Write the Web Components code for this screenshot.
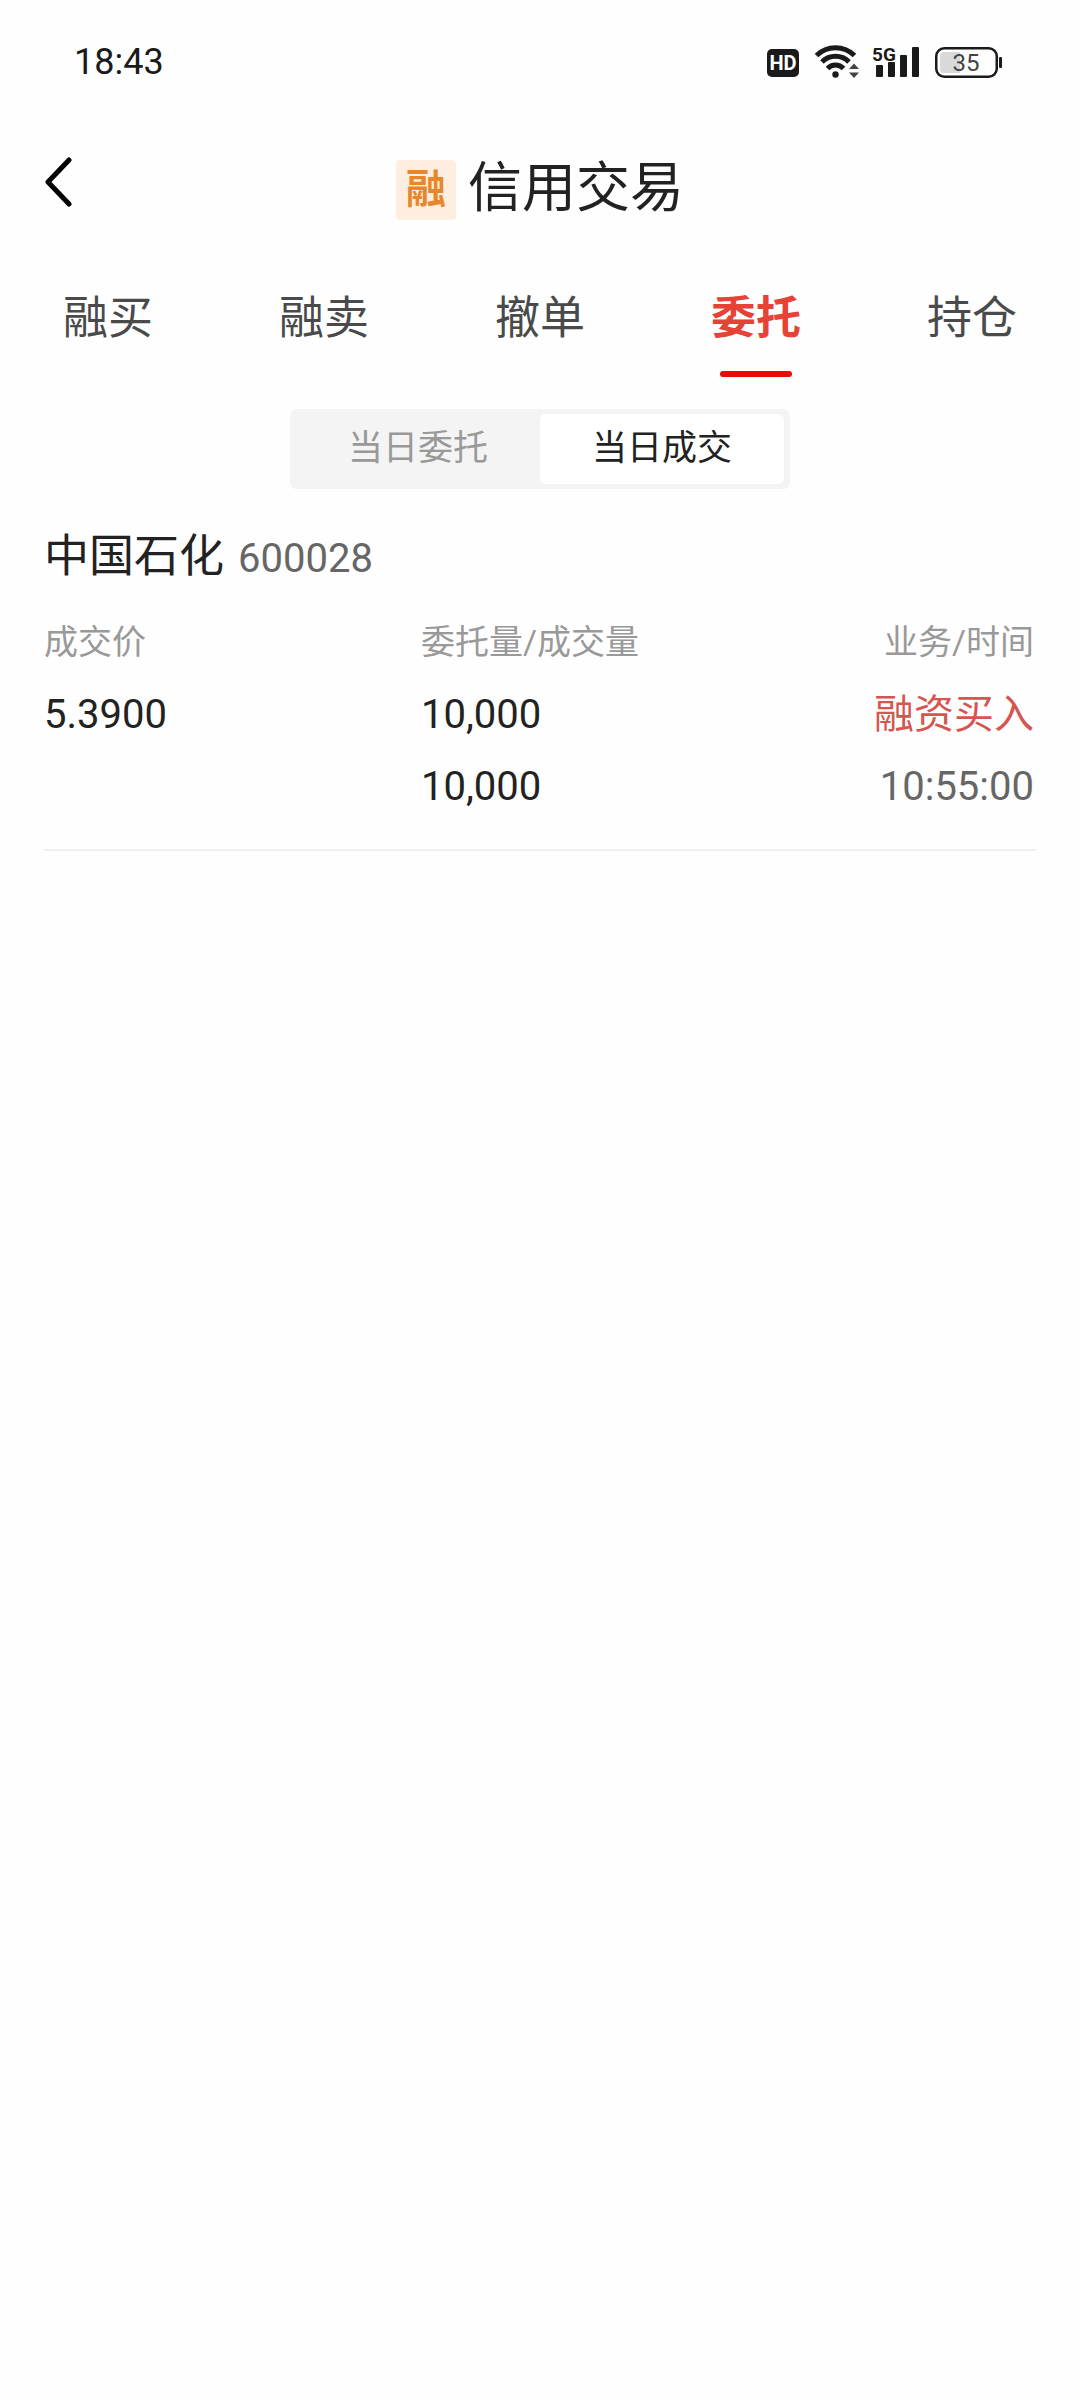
<!DOCTYPE html>
<html lang="zh-CN">
<head>
<meta charset="utf-8">
<meta name="viewport" content="width=device-width, initial-scale=1">
<title>信用交易</title>
<style>
body {
    margin: 0;
    min-height: 100vh;
    background-color: #fefefe;
    color: #222;
    font-family: Roboto, "Noto Sans CJK SC", sans-serif;
}
</style>
</head>
<body>
<status-bar time="18:43" battery="35"></status-bar>
<page-header badge="融">信用交易</page-header>
<tab-strip selected="3">
    <span>融买</span>
    <span>融卖</span>
    <span>撤单</span>
    <span>委托</span>
    <span>持仓</span>
</tab-strip>
<segment-switch selected="1">
    <span>当日委托</span>
    <span>当日成交</span>
</segment-switch>
<deal-record code="600028" price="5.3900" ordered="10,000" filled="10,000" time="10:55:00">
    中国石化
    <span slot="action">融资买入</span>
</deal-record>

<script>
class StatusBar extends HTMLElement {
    constructor() {
        super();
        this.attachShadow({ mode: 'open' });
        this.render();
    }

    render () {
        this.shadowRoot.innerHTML = `
<style>
:host {
    display: flex;
    align-items: center;
    justify-content: space-between;
    height: 124px;
    padding: 0 78px 0 74px;
    color: #1a1a1a;
}
time {
    font-size: 36px;
}
.icons {
    display: flex;
    align-items: center;
}
svg {
    display: block;
}
text {
    font-family: Roboto, sans-serif;
}
</style>
<time>${this.getAttribute('time')}</time>
<div class="icons">
    <svg width="235" height="40" viewBox="0 0 235 40" fill="#1a1a1a">
        <!-- HD voice -->
        <rect x="0" y="7" width="32" height="28" rx="5"/>
        <text x="16" y="28" font-size="20" font-weight="700" text-anchor="middle" fill="#fff">HD</text>
        <!-- wifi -->
        <g fill="none" stroke="#1a1a1a" stroke-width="5">
            <path d="M49.500 13.500A27 27 0 0 1 87.500 13.500"/>
            <path d="M55 20A19 19 0 0 1 82 20"/>
            <path d="M60.500 26.500A11 11 0 0 1 76.500 26.500"/>
        </g>
        <circle cx="68.500" cy="32.500" r="3.200"/>
        <path d="M82 27L87 21.500L92 27zM82 30.500L87 36L92 30.500z" fill="#444"/>
        <!-- 5G signal -->
        <text x="105" y="19" font-size="19" font-weight="700">5G</text>
        <rect x="109" y="23" width="7" height="12" rx="1"/>
        <rect x="121" y="20" width="7" height="15" rx="1"/>
        <rect x="133" y="13" width="7" height="22" rx="1"/>
        <rect x="145" y="5" width="7" height="30" rx="1"/>
        <!-- battery -->
        <rect x="169.250" y="6.250" width="60.500" height="28.500" rx="8" fill="none" stroke="#1a1a1a" stroke-width="2.500"/>
        <path d="M177 10H193V31H177A4 4 0 0 1 173 27V14A4 4 0 0 1 177 10z" fill="#d9d9d9"/>
        <rect x="232" y="15" width="3" height="11" rx="1"/>
        <text x="199" y="29" font-size="24" text-anchor="middle" fill="#444">${this.getAttribute('battery')}</text>
    </svg>
</div>`;
    }
}

class PageHeader extends HTMLElement {
    constructor() {
        super();
        this.attachShadow({ mode: 'open' });
        this.render();
    }

    render () {
        this.shadowRoot.innerHTML = `
<style>
:host {
    display: grid;
    grid-template-columns: 1fr auto 1fr;
    align-items: center;
    height: 126px;
    padding: 0 45px;
}
button {
    justify-self: start;
    padding: 0 0 10px;
    border: 0;
    background: none;
}
svg {
    display: block;
}
.title {
    display: flex;
    align-items: center;
    gap: 12px;
    padding-top: 4px;
}
.badge {
    width: 60px;
    margin-top: 2px;
    border-radius: 4px;
    background-color: #fdeee0;
    color: #e8862a;
    font-size: 40px;
    font-weight: 700;
    line-height: 60px;
    text-align: center;
}
h1 {
    margin: 0;
    font-size: 54px;
    font-weight: 400;
    line-height: 80px;
}
</style>
<button aria-label="返回">
    <svg width="28" height="50" viewBox="0 0 28 50" fill="none" stroke="#000" stroke-width="5" stroke-linecap="round" stroke-linejoin="round">
        <path d="M24 3L3 25L24 47"/>
    </svg>
</button>
<div class="title">
    <span class="badge">${this.getAttribute('badge')}</span>
    <h1><slot></slot></h1>
</div>`;
    }
}

// shared by the controls that turn their children into buttons
class ButtonGroup extends HTMLElement {
    constructor() {
        super();
        this.attachShadow({ mode: 'open' });
        this.render();
    }

    render () {
        this.shadowRoot.innerHTML = this.css;
        const items = [...this.children];
        items.forEach((item, i) => {
            item.slot = `item-${i}`;
            const button = document.createElement('button');
            button.innerHTML = `<slot name="item-${i}"></slot>`;
            button.onclick = () => this.select(i);
            this.shadowRoot.appendChild(button);
        });
        this.select(Number(this.getAttribute('selected')));
    }

    select (index) {
        this.shadowRoot.querySelectorAll('button').forEach((button, i) => {
            button.setAttribute('aria-pressed', i === index);
        });
    }
}

class TabStrip extends ButtonGroup {
    get css () {
        return `
<style>
:host {
    display: flex;
    padding-top: 36px;
}
button {
    flex: 1;
    padding: 0;
    border: 0;
    background: none;
    color: #4a4a4a;
    font-family: inherit;
    font-size: 45px;
    line-height: 66px;
}
button::after {
    content: "";
    display: block;
    width: 72px;
    height: 6px;
    margin: 19px auto 0;
    border-radius: 3px;
}
button[aria-pressed="true"] {
    color: #e64236;
    font-weight: 700;
}
button[aria-pressed="true"]::after {
    background-color: #ea0a06;
}
</style>`;
    }
}

class SegmentSwitch extends ButtonGroup {
    get css () {
        return `
<style>
:host {
    display: flex;
    width: fit-content;
    margin: 32px auto;
    padding: 5px 6px;
    border-radius: 6px;
    background-color: #f4f4f4;
}
button {
    padding: 0 52px;
    border: 0;
    border-radius: 6px;
    background: none;
    color: #999;
    font-family: inherit;
    font-size: 35px;
    line-height: 70px;
}
button[aria-pressed="true"] {
    background-color: #fff;
    color: #222;
}
</style>`;
    }
}

class DealRecord extends HTMLElement {
    constructor() {
        super();
        this.attachShadow({ mode: 'open' });
        this.render();
    }

    render () {
        this.shadowRoot.innerHTML = `
<style>
:host {
    display: block;
    margin: 0 44px;
    padding-bottom: 26px;
    border-bottom: 2px solid #f0f0f0;
    font-size: 40px;
    line-height: 72px;
}
header {
    display: flex;
    align-items: baseline;
    gap: 14px;
    margin-bottom: 12px;
}
h2 {
    margin: 0;
    font-size: 45px;
    font-weight: 400;
}
.code, .time {
    color: #666;
}
table {
    width: 100%;
    table-layout: fixed;
    border-collapse: collapse;
}
th, td {
    padding: 0;
    text-align: left;
}
td {
    height: 72px;
}
th {
    padding-bottom: 2px;
    color: #999;
    font-size: 34px;
    font-weight: 400;
    line-height: 70px;
}
th:first-child {
    width: 38%;
}
th:last-child, td:last-child {
    padding-right: 2px;
    text-align: right;
}
.action {
    color: #d65550;
}
</style>
<header>
    <h2><slot></slot></h2>
    <span class="code">${this.getAttribute('code')}</span>
</header>
<table>
    <thead>
        <tr><th>成交价</th><th>委托量/成交量</th><th>业务/时间</th></tr>
    </thead>
    <tbody>
        <tr>
            <td>${this.getAttribute('price')}</td>
            <td>${this.getAttribute('ordered')}</td>
            <td class="action"><slot name="action"></slot></td>
        </tr>
        <tr>
            <td></td>
            <td>${this.getAttribute('filled')}</td>
            <td class="time">${this.getAttribute('time')}</td>
        </tr>
    </tbody>
</table>`;
    }
}

customElements.define('status-bar', StatusBar);
customElements.define('page-header', PageHeader);
customElements.define('tab-strip', TabStrip);
customElements.define('segment-switch', SegmentSwitch);
customElements.define('deal-record', DealRecord);
</script>
</body>
</html>
